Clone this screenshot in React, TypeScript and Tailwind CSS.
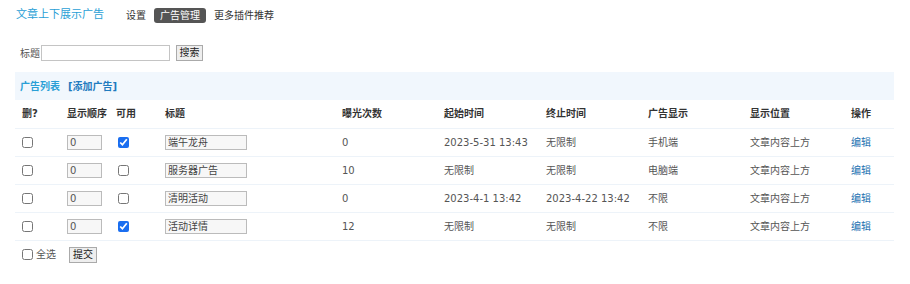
import React from 'react'

type Row = {
  order: string
  on: boolean
  title: string
  views: string
  start: string
  end: string
  device: string
  place: string
}

const rows: Row[] = [
  { order: '0', on: true, title: '端午龙舟', views: '0', start: '2023-5-31 13:43', end: '无限制', device: '手机端', place: '文章内容上方' },
  { order: '0', on: false, title: '服务器广告', views: '10', start: '无限制', end: '无限制', device: '电脑端', place: '文章内容上方' },
  { order: '0', on: false, title: '清明活动', views: '0', start: '2023-4-1 13:42', end: '2023-4-22 13:42', device: '不限', place: '文章内容上方' },
  { order: '0', on: true, title: '活动详情', views: '12', start: '无限制', end: '无限制', device: '不限', place: '文章内容上方' },
]

const font = { fontFamily: '"DejaVu Sans", "Noto Sans CJK SC", sans-serif' }

export default function App() {
  return (
    <div className="w-[910px] h-[284px] bg-white text-[10px] text-[#555]" style={font}>
      {/* header with tabs */}
      <div className="flex items-center h-[30px] pl-[16px]">
        <span className="text-[11px] text-[#2a9fd6] mr-[22px]">文章上下展示广告</span>
        <span className="text-[#333] mr-[8px]">设置</span>
        <span className="bg-[#555] text-white rounded-[3px] px-[6px] h-[15px] leading-[15px] mr-[8px]">广告管理</span>
        <span className="text-[#333]">更多插件推荐</span>
      </div>

      {/* search */}
      <div className="flex items-center h-[16px] mt-[15px] pl-[20px]">
        <span className="text-[#555] mr-[1px]">标题</span>
        <input className="w-[129px] h-[16px] border border-[#c4c4c4] bg-white mr-[6px]" />
        <button className="w-[27px] h-[16px] border border-[#aaa] bg-[#eee] text-[#222] leading-none">搜索</button>
      </div>

      {/* list band */}
      <div className="mx-[15px] w-[879px] mt-[11px] h-[28px] bg-[#f1f7fd] flex items-center pl-[5px] font-bold text-[#2a9fd6]">
        <span className="mr-[8px]">广告列表</span>
        <span className="text-[#1f7bbf]">[添加广告]</span>
      </div>

      <table className="ml-[15px] w-[879px] border-collapse table-fixed">
        <colgroup>
          <col className="w-[45px]" />
          <col className="w-[52px]" />
          <col className="w-[46px]" />
          <col className="w-[177px]" />
          <col className="w-[102px]" />
          <col className="w-[102px]" />
          <col className="w-[102px]" />
          <col className="w-[102px]" />
          <col className="w-[101px]" />
          <col className="w-[50px]" />
        </colgroup>
        <thead>
          <tr className="h-[28px] text-left font-bold text-[#333] border-b border-[#edf3f9]">
            <th className="pl-[7px] font-bold">删?</th>
            <th className="pl-[7px] font-bold">显示顺序</th>
            <th className="pl-[4px] font-bold">可用</th>
            <th className="pl-[7px] font-bold">标题</th>
            <th className="pl-[7px] font-bold">曝光次数</th>
            <th className="pl-[7px] font-bold">起始时间</th>
            <th className="pl-[7px] font-bold">终止时间</th>
            <th className="pl-[7px] font-bold">广告显示</th>
            <th className="pl-[7px] font-bold">显示位置</th>
            <th className="pl-[7px] font-bold">操作</th>
          </tr>
        </thead>
        <tbody>
          {rows.map((r, i) => (
            <tr key={i} className="h-[28px] border-b border-[#edf3f9]">
              <td className="pl-[7px]">
                <input type="checkbox" className="w-[11px] h-[11px] m-0 align-middle" />
              </td>
              <td className="pl-[7px]">
                <input
                  defaultValue={r.order}
                  className="w-[35px] h-[15px] border border-[#bbb] bg-[#f7f7f7] px-[2px] text-[10px] text-[#555] align-middle"
                />
              </td>
              <td className="pl-[6px]">
                <input
                  type="checkbox"
                  defaultChecked={r.on}
                  className="w-[11px] h-[11px] m-0 align-middle accent-[#1a6ef0]"
                />
              </td>
              <td className="pl-[7px]">
                <input
                  defaultValue={r.title}
                  className="w-[82px] h-[15px] border border-[#bbb] bg-[#f7f7f7] px-[2px] text-[10px] text-[#444] align-middle"
                />
              </td>
              <td className="pl-[7px]">{r.views}</td>
              <td className="pl-[7px] whitespace-nowrap">{r.start}</td>
              <td className="pl-[7px] whitespace-nowrap">{r.end}</td>
              <td className="pl-[7px]">{r.device}</td>
              <td className="pl-[7px]">{r.place}</td>
              <td className="pl-[7px] text-[#2271b1]">编辑</td>
            </tr>
          ))}
        </tbody>
      </table>

      {/* footer actions */}
      <div className="flex items-center mt-[6px] pl-[22px]">
        <input type="checkbox" className="w-[11px] h-[11px] m-0" />
        <span className="ml-[3px] mr-[13px] text-[#555]">全选</span>
        <button className="w-[28px] h-[16px] border border-[#aaa] bg-[#eee] text-[#222] leading-none">提交</button>
      </div>
    </div>
  )
}
